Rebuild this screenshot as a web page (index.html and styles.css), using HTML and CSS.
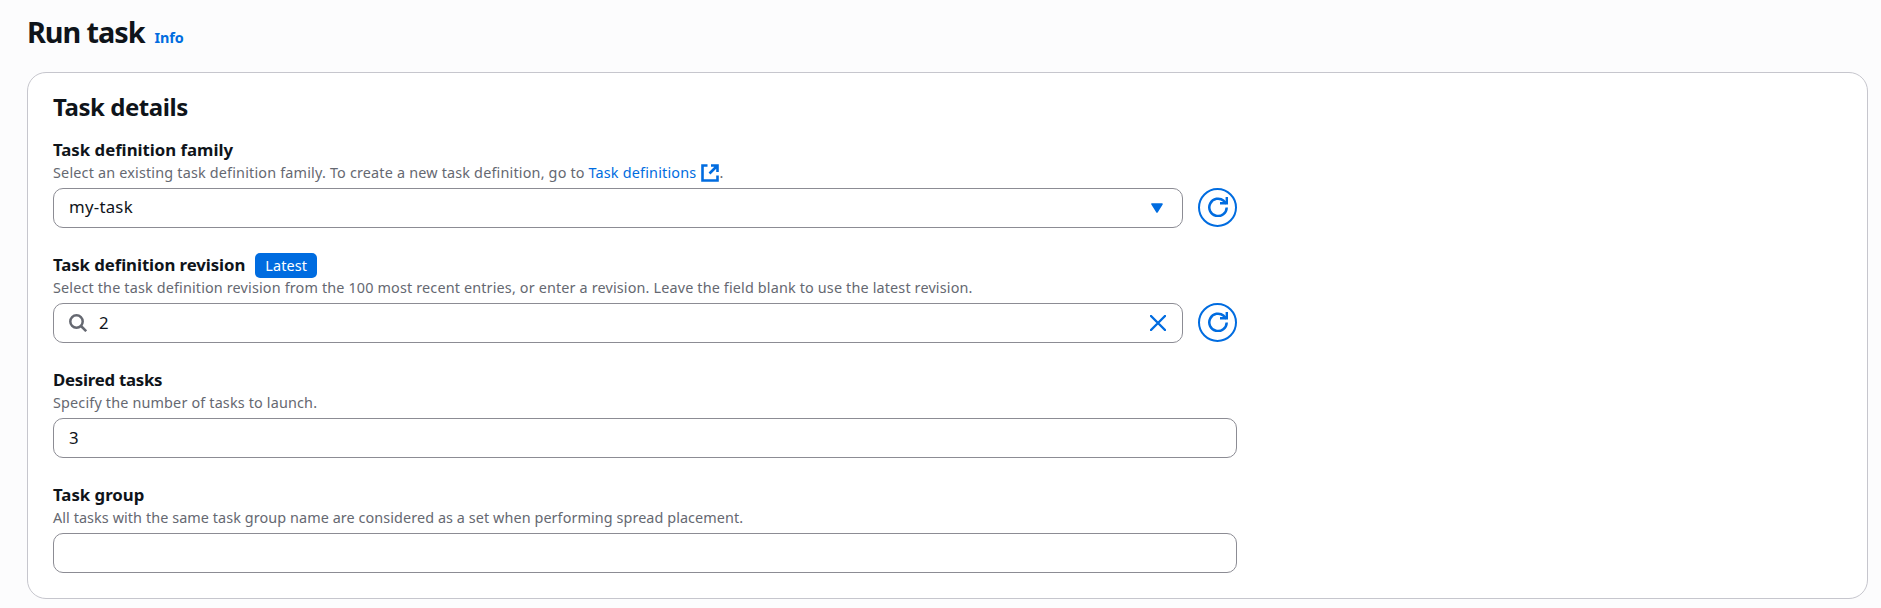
FILE: index.html
```
<!DOCTYPE html>
<html lang="en">
<head>
<meta charset="utf-8">
<title>Run task</title>
<link rel="stylesheet" href="styles.css">
</head>
<body>
<svg class="sprite" aria-hidden="true">
  <symbol id="refresh" viewBox="0 0 20 20">
    <path d="M18.700 10.500a8.700 8.700 0 1 1-3-6.700L18.500 6.500" fill="none" stroke="currentColor" stroke-width="2.500"/>
    <path d="M18.800 0v6.300h-6.800" fill="none" stroke="currentColor" stroke-width="2.400"/>
  </symbol>
</svg>
<main class="page">
  <header class="page-header">
    <h1 class="page-title">Run task</h1>
    <a class="info">Info</a>
  </header>
  <section class="card">
    <h2 class="card-title">Task details</h2>

    <div class="field">
      <div class="label"><span class="l-family">Task definition family</span></div>
      <div class="hint"><span class="h-family">Select an existing task definition family. To create a new task definition, go to</span> <a class="link">Task definitions</a><svg class="external" viewBox="0 0 18 18"><path d="M6.500 1.500H1.500v15h15v-5M10 1.500h6.500V8M16.500 1.500l-8 8" fill="none" stroke="currentColor" stroke-width="2.600"/></svg>.</div>
      <div class="row">
        <div class="control"><span class="value value-family">my-task</span>
          <svg class="caret" viewBox="0 0 12 10"><path d="M1 1h10L6 9z" fill="currentColor" stroke="currentColor" stroke-width="1.600" stroke-linejoin="round"/></svg>
        </div>
        <button class="refresh" aria-label="Refresh families"><svg class="refresh-icon"><use href="#refresh"/></svg></button>
      </div>
    </div>

    <div class="field">
      <div class="label"><span class="l-revision">Task definition revision</span><span class="badge">Latest</span></div>
      <div class="hint"><span class="h-revision">Select the task definition revision from the 100 most recent entries, or enter a revision. Leave the field blank to use the latest revision.</span></div>
      <div class="row">
        <div class="control">
          <svg class="search" viewBox="0 0 18 18"><circle cx="7.500" cy="7.500" r="6.200" fill="none" stroke="currentColor" stroke-width="2.500"/><path d="M12 12l5.200 5.200" stroke="currentColor" stroke-width="2.500"/></svg>
          <span class="value">2</span>
          <svg class="clear" viewBox="0 0 16 16"><path d="M1 1l14 14M15 1L1 15" stroke="currentColor" stroke-width="2.400" stroke-linecap="round"/></svg>
        </div>
        <button class="refresh" aria-label="Refresh revisions"><svg class="refresh-icon"><use href="#refresh"/></svg></button>
      </div>
    </div>

    <div class="field">
      <div class="label"><span class="l-desired">Desired tasks</span></div>
      <div class="hint"><span class="h-desired">Specify the number of tasks to launch.</span></div>
      <div class="row"><div class="control"><span class="value">3</span></div></div>
    </div>

    <div class="field">
      <div class="label"><span class="l-group">Task group</span></div>
      <div class="hint"><span class="h-group">All tasks with the same task group name are considered as a set when performing spread placement.</span></div>
      <div class="row"><div class="control"></div></div>
    </div>
  </section>
</main>
</body>
</html>
```
FILE: styles.css
```
* { box-sizing: border-box; }
body {
  margin: 0;
  background: #fcfcfd;
  color: #0f141a;
  font-family: "Noto Sans", "Open Sans", sans-serif;
  font-size: 16.8px;
}
.sprite { display: none; }
.page { padding: 13px 13px 9px 27px; }
.page-header {
  display: flex;
  align-items: baseline;
  gap: 10px;
  height: 59px;
}
.page-title { margin: 0; font-size: 28.8px; line-height: 38px; font-weight: 700; letter-spacing: -1.05px; }
.info { color: #006ce0; font-size: 14.4px; font-weight: 700; letter-spacing: -0.1px; }
.card {
  height: 527px;
  padding: 20px 25px 24px;
  background: #fff;
  border: 1px solid #c6c6cd;
  border-radius: 19px;
}
.card-title { margin: 0 0 17px; font-size: 24px; line-height: 28px; font-weight: 700; letter-spacing: -0.45px; }
.field { width: 1184px; height: 90px; margin-bottom: 25px; white-space: nowrap; }
.label { display: flex; align-items: center; height: 24px; font-weight: 700; line-height: 22px; }
.l-family { letter-spacing: -0.01px; }
.l-revision { letter-spacing: -0.07px; }
.l-desired { letter-spacing: -0.25px; }
.l-group { letter-spacing: 0; }
.badge {
  height: 25px;
  margin-left: 10px;
  padding: 0 10px;
  border-radius: 5px;
  background: #006ce0;
  color: #fff;
  font-size: 14.4px;
  line-height: 25px;
  font-weight: 400;
  letter-spacing: 0.1px;
}
.hint { height: 26px; color: #656871; font-size: 14.4px; line-height: 22px; }
.h-family { letter-spacing: 0.18px; }
.h-revision { letter-spacing: 0.152px; }
.h-desired { letter-spacing: 0.16px; }
.h-group { letter-spacing: 0.08px; }
.link { letter-spacing: 0.19px; }
.link, .external { color: #006ce0; }
.external { width: 18px; height: 18px; margin-left: 5px; vertical-align: -4px; }
.row { display: flex; gap: 15px; }
.control {
  flex: 1;
  display: flex;
  align-items: center;
  height: 40px;
  padding: 0 15px;
  border: 1px solid #8c8c94;
  border-radius: 10px;
  background: #fff;
}
.value { flex: 1; padding-bottom: 1px; line-height: 24px; color: #0f141a; }
.value-family { padding-bottom: 2px; letter-spacing: 0.25px; }
.caret { width: 12px; height: 10px; margin-right: 4px; color: #006ce0; }
.search { width: 18px; height: 18px; margin-right: 12px; color: #656871; }
.clear { width: 16px; height: 16px; margin-right: 1px; color: #006ce0; }
.refresh {
  display: flex;
  align-items: center;
  justify-content: center;
  width: 39px;
  height: 39px;
  padding: 0 0 1px 1px;
  border: 2px solid #006ce0;
  border-radius: 50%;
  background: #fff;
  color: #006ce0;
}
.refresh-icon { width: 20px; height: 20px; }
```
